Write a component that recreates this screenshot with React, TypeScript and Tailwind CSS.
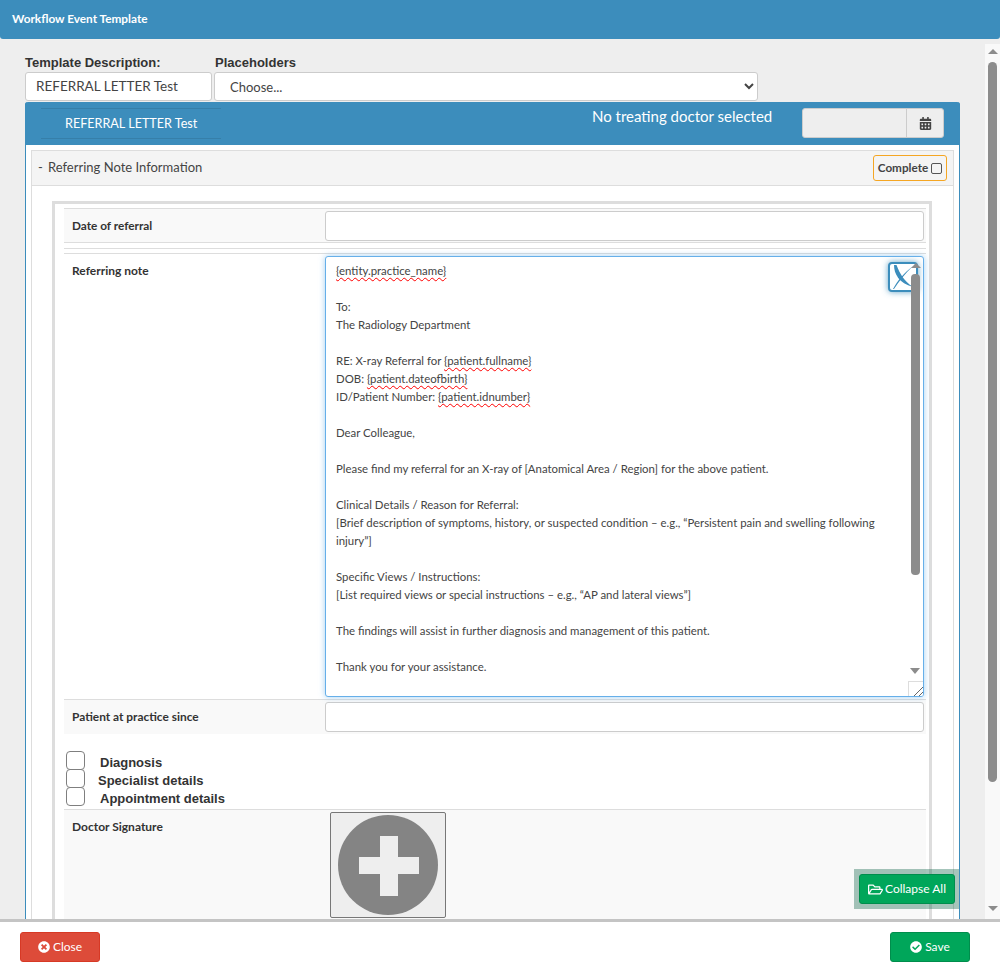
import { FaCalendarAlt, FaCheckCircle, FaRegFolderOpen, FaTimesCircle } from "react-icons/fa";

const Bad = ({ children }: { children: string }) => (
  <span className="underline decoration-wavy decoration-[#f00] decoration-1 underline-offset-2">{children}</span>
);

const Checkbox = () => (
  <input type="checkbox" className="appearance-none block w-[19px] h-[19px] -mt-[5px] mb-px border-[1.5px] border-[#7f7f7f] rounded-[4px] bg-white" />
);

function NoteText() {
  return (
    <div className="text-[11.4px] leading-[18px] text-[#444]">
      <p><Bad>{"{entity.practice_name}"}</Bad></p>
      <p>&nbsp;</p>
      <p>To:</p>
      <p>The Radiology Department</p>
      <p>&nbsp;</p>
      <p>RE: X-ray Referral for <Bad>{"{patient.fullname}"}</Bad></p>
      <p>DOB: <Bad>{"{patient.dateofbirth}"}</Bad></p>
      <p>ID/Patient Number: <Bad>{"{patient.idnumber}"}</Bad></p>
      <p>&nbsp;</p>
      <p>Dear Colleague,</p>
      <p>&nbsp;</p>
      <p>Please find my referral for an X-ray of [Anatomical Area / Region] for the above patient.</p>
      <p>&nbsp;</p>
      <p>Clinical Details / Reason for Referral:</p>
      <p>[Brief description of symptoms, history, or suspected condition – e.g., “Persistent pain and swelling following</p>
      <p>injury”]</p>
      <p>&nbsp;</p>
      <p>Specific Views / Instructions:</p>
      <p>[List required views or special instructions – e.g., “AP and lateral views”]</p>
      <p>&nbsp;</p>
      <p>The findings will assist in further diagnosis and management of this patient.</p>
      <p>&nbsp;</p>
      <p>Thank you for your assistance.</p>
    </div>
  );
}

export default function App() {
  return (
    <div className="relative h-[972px] flex flex-col overflow-hidden bg-[#eee] font-['Lato',sans-serif] text-[#333]">
      {/* header */}
      <div className="h-[39px] shrink-0 bg-[#3c8dbc] rounded-b-[3px] flex items-center pl-3 pb-[2px] text-[11.8px] font-bold text-white">
        Workflow Event Template
      </div>

      <div className="flex-1 min-h-0 flex">
        <div className="flex-1 min-w-0 overflow-hidden pl-[25px] pr-[25px] pt-[15px]">
          <div className="flex font-['Liberation_Sans',sans-serif] text-[13px] font-bold leading-[18px] text-[#333]">
            <div className="w-[190px]">Template Description:</div>
            <div>Placeholders</div>
          </div>
          <div className="flex h-[30px] gap-[2px]">
            <div className="w-[187px] h-[29px] bg-white border border-[#ccc] rounded-[3px] pl-[10px] flex items-center text-[13.5px] text-[#444]">
              REFERRAL LETTER Test
            </div>
            <select className="w-[544px] h-[29px] bg-white border border-[#ccc] rounded-[3px] pl-[11px] text-[13px] text-[#444]">
              <option>Choose...</option>
            </select>
          </div>

          {/* blue panel */}
          <div className="border-x border-[#3c8dbc] bg-white rounded-t-[3px]">
            <div className="relative -mx-px h-[43px] bg-[#3c8dbc] rounded-t-[3px] flex items-start text-white">
              <div className="ml-[16px] mt-[6px] w-[180px] h-[31px] border-y border-[#367fa9] pl-[24px] pt-[2px] flex items-center text-[12.6px]">
                REFERRAL LETTER Test
              </div>
              <div className="ml-[371px] mt-[3px] text-[15px] leading-[22px]">No treating doctor selected</div>
              <div className="absolute left-[777px] top-[6px] w-[142px] h-[30px] flex bg-[#eee] border border-[#ccc] rounded-[3px] text-[#444]">
                <div className="w-[104px] border-r border-[#ccc]" />
                <div className="flex-1 flex items-center justify-center"><FaCalendarAlt size={13} /></div>
              </div>
            </div>

            <div className="pl-[5px] pr-[5px] pt-[5px]">
              <div className="border border-[#ddd]">
                <div className="relative h-[35px] bg-[#f4f4f4] border-b border-[#ddd] flex items-center pl-[6px] text-[13px] text-[#444]">
                  <span className="w-[10px]">-</span>
                  <span>Referring Note Information</span>
                  <div className="absolute right-[6px] top-[4px] w-[74px] h-[26px] border-[1.5px] border-[#f5a623] rounded-[3px] flex items-center justify-center gap-[3px] text-[11.7px] font-bold">
                    Complete
                    <span className="w-[11px] h-[11px] border-[1.5px] border-[#555] rounded-[2px]" />
                  </div>
                </div>

                <div className="pl-[20px] pr-[21px] pt-[15px]">
                  <div className="border-[3px] border-[#ddd] border-b-0 pl-[9px] pr-[3px] pt-[4px]">
                    <div className="h-[35px] bg-[#f9f9f9] border-y border-[#ddd] flex pt-[2px] box-border">
                      <div className="w-[261px] pl-2 pt-[6px] text-[11.8px] font-bold leading-[18px]">Date of referral</div>
                      <div className="w-[599px] h-[30px] bg-white border border-[#ccc] rounded-[3px]" />
                    </div>
                    <div className="h-[11px] border-b border-[#ddd] flex flex-col">
                      <div className="h-[6px] border-b border-[#ddd]" />
                    </div>

                    <div className="flex h-[445px] pt-[2px]">
                      <div className="w-[261px] pl-2 pt-[6px] text-[12px] font-bold leading-[18px]">Referring note</div>
                      <div className="relative w-[599px] h-[441px] bg-white border border-[#66afe9] rounded-[3px] shadow-[0_0_6px_rgba(102,175,233,0.6)] pl-[10px] pt-[5px] overflow-hidden">
                        <NoteText />
                        <div className="absolute left-[562px] top-[5px] w-[30px] h-[30px] bg-white border-2 border-[#3c8dbc] rounded-[4px] shadow-[0_0_6px_rgba(60,141,188,0.8)]">
                          <svg viewBox="0 0 26 26" className="w-[26px] h-[26px]">
                            <path d="M4 1C4 10 9 19 23 23C14 17 10 10 6.5 1Z" fill="#3c8dbc" />
                            <path d="M3 25C8 16 14 9 23 2C15 10 9 17 4 25Z" fill="#3c8dbc" />
                          </svg>
                        </div>
                        <div className="absolute left-[585px] top-[6px] w-0 h-0 border-x-[5px] border-x-transparent border-b-[5px] border-b-[#8c8c8c]" />
                        <div className="absolute left-[585px] top-[17px] w-[9px] h-[301px] bg-[#8c8c8c] rounded-[4px]" />
                        <div className="absolute left-[584px] top-[411px] w-0 h-0 border-x-[5px] border-x-transparent border-t-[6px] border-t-[#8c8c8c]" />
                        <div className="absolute right-0 bottom-0 w-[15px] h-[15px] bg-white border-l border-t border-[#ddd]">
                          <svg viewBox="0 0 15 15" className="w-[15px] h-[15px]">
                            <path d="M5 14L14 5M10 14L14 10" stroke="#666" strokeWidth="1" fill="none" />
                          </svg>
                        </div>
                      </div>
                    </div>

                    <div className="h-[35px] bg-[#f9f9f9] border-t border-[#ddd] flex pt-[2px]">
                      <div className="w-[261px] pl-2 pt-[6px] text-[11.9px] font-bold leading-[18px]">Patient at practice since</div>
                      <div className="w-[599px] h-[30px] bg-white border border-[#ccc] rounded-[3px]" />
                    </div>

                    <div className="h-[76px] pt-[20px] pl-[2px] flex flex-col gap-0 font-['Liberation_Sans',sans-serif] text-[13px] font-bold leading-[18px] border-b border-[#ddd]">
                      <label className="flex h-[18px] items-center"><Checkbox /><span className="ml-[15px]">Diagnosis</span></label>
                      <label className="flex h-[18px] items-center"><Checkbox /><span className="ml-[13px]">Specialist details</span></label>
                      <label className="flex h-[18px] items-center"><Checkbox /><span className="ml-[15px]">Appointment details</span></label>
                    </div>

                    <div className="h-[140px] bg-[#f9f9f9] flex pt-[2px]">
                      <div className="w-[266px] pl-2 pt-[6px] text-[12px] font-bold leading-[18px]">Doctor Signature</div>
                      <div className="w-[116px] h-[106px] bg-[#eee] border border-[#777] rounded-[2px] flex items-center justify-center">
                        <svg viewBox="0 0 100 100" className="w-[100px] h-[100px]">
                          <circle cx="50" cy="50" r="50" fill="#848484" />
                          <path d="M42 21h18v21h21v17H60v22H42V59H21V42h21z" fill="#eee" />
                        </svg>
                      </div>
                    </div>
                  </div>
                </div>
              </div>
            </div>
          </div>
        </div>

        {/* page scrollbar */}
        <div className="w-[15px] mt-[5px] shrink-0 bg-[#f9f9f9] flex flex-col items-center">
          <div className="mt-[5px] w-0 h-0 border-x-[5px] border-x-transparent border-b-[5px] border-b-[#8c8c8c]" />
          <div className="mt-[8px] w-[9px] h-[720px] bg-[#8c8c8c] rounded-[5px]" />
          <div className="mt-[124px] w-0 h-0 border-x-[5px] border-x-transparent border-t-[5px] border-t-[#8c8c8c]" />
        </div>
      </div>

      {/* footer */}
      <div className="h-[53px] shrink-0 bg-white border-t-[3px] border-[#c4c4c4] flex justify-between px-[20px] pr-[30px] pt-[10px]">
        <button className="w-[80px] h-[30px] bg-[#dd4b39] border border-[#d73925] rounded-[3px] text-white text-[12px] flex items-center justify-center gap-[3px]">
          <FaTimesCircle size={12} /> Close
        </button>
        <button className="w-[80px] h-[30px] bg-[#00a65a] border border-[#008d4c] rounded-[3px] text-white text-[12px] flex items-center justify-center gap-[3px]">
          <FaCheckCircle size={12} /> Save
        </button>
      </div>

      {/* overlay */}
      <div className="absolute left-[854px] top-[869px] w-[105px] h-[40px] bg-[rgba(0,90,60,0.35)] pl-[5px] pt-[5px]">
        <button className="w-[96px] h-[30px] bg-[#00a65a] border border-[#008d4c] rounded-[3px] text-white text-[12px] flex items-center justify-center gap-[2px]">
          <FaRegFolderOpen size={15} /> Collapse All
        </button>
      </div>
    </div>
  );
}
